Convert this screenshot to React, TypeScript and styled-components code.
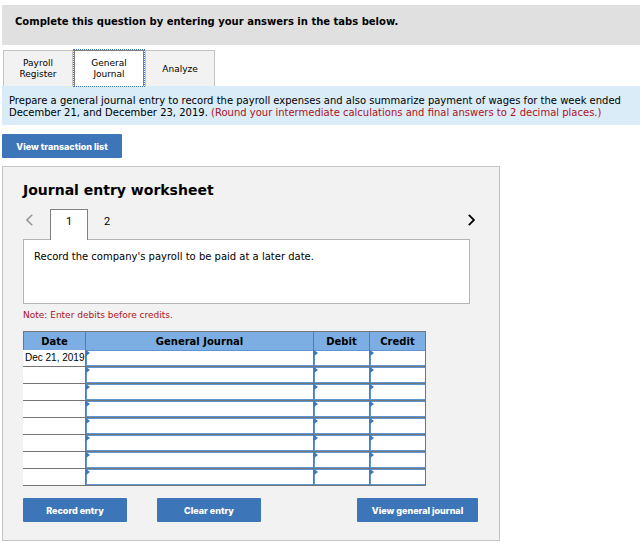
import React, { useState } from "react";
import styled, { createGlobalStyle } from "styled-components";

const GlobalStyle = createGlobalStyle`
  *, *::before, *::after { box-sizing: border-box; }
  body {
    margin: 0;
    background: #fff;
    color: #000;
    font-family: Verdana, "DejaVu Sans", sans-serif;
    font-size: 10px;
    line-height: 12px;
  }
  button, input { font: inherit; color: inherit; }
`;

const Page = styled.main`
  padding: 5px 2px 14px;
`;

const Banner = styled.header`
  background: #e0e0e0;
  padding: 11px 13px 17px;
  font-weight: 700;
`;

const TabBar = styled.div`
  display: flex;
  gap: 1px;
  height: 41px;
  padding: 5px 0 0 1px;
`;

const Tab = styled.button<{ $active: boolean }>`
  width: 70px;
  padding: 1px 8px 0;
  border: 1px solid ${(p) => (p.$active ? "#808080" : "#c4c4c4")};
  border-bottom: 0;
  background: ${(p) => (p.$active ? "#fff" : "#f2f2f2")};
  font-size: 9px;
  line-height: 11px;
  outline: ${(p) => (p.$active ? "1px dotted #3d76b8" : "none")};
  z-index: ${(p) => (p.$active ? 1 : 0)};
`;

const Instructions = styled.p`
  margin: 0;
  padding: 9px 7px 6px;
  background: #daecf8;
`;

const Warning = styled.span`
  color: #b01020;
`;

const ActionButton = styled.button`
  height: 24px;
  padding: 2px 12px 0;
  border: 0;
  border-radius: 1px;
  background: #3d76b8;
  color: #fff;
  font-family: Inter, "Liberation Sans", sans-serif;
  font-size: 9px;
  font-weight: 800;
  white-space: nowrap;
`;

const ListButton = styled(ActionButton)`
  display: block;
  width: 120px;
  margin: 9px 0 8px;
`;

const Panel = styled.section`
  max-width: 498px;
  padding: 14px 21px 18px 20px;
  border: 1px solid #c4c4c4;
  background: #f2f2f2;
`;

const PanelTitle = styled.h2`
  margin: 0;
  font-size: 14px;
  line-height: 18px;
`;

const Pager = styled.nav`
  display: flex;
  align-items: flex-start;
  height: 40px;
  padding-top: 10px;
`;

const Arrow = styled.button`
  display: flex;
  width: 13px;
  height: 22px;
  padding: 0;
  border: 0;
  background: none;
  align-items: center;
  justify-content: center;
`;

const PageTabs = styled.div`
  display: flex;
  flex: 1;
  padding-left: 14px;
`;

const PageTab = styled.button<{ $active: boolean }>`
  width: 38px;
  height: 31px;
  padding: 0 0 6px;
  border: 1px solid ${(p) => (p.$active ? "#808080" : "transparent")};
  border-bottom: 0;
  background: ${(p) => (p.$active ? "#fff" : "transparent")};
  font-family: Roboto, sans-serif;
  font-size: 11px;
  z-index: 1;
`;

const Prompt = styled.div`
  min-height: 65px;
  margin-right: 8px;
  padding: 11px 10px;
  border: 1px solid #b4b4b4;
  background: #fff;
`;

const Note = styled.p`
  margin: 5px 0 10px;
  color: #b01020;
  font-size: 9px;
`;

const Ledger = styled.table`
  width: 100%;
  max-width: 403px;
  border-spacing: 0;
  table-layout: fixed;
`;

const Head = styled.th<{ $width?: number }>`
  width: ${(p) => (p.$width ? `${p.$width}px` : "auto")};
  height: 19px;
  padding: 1px 0 0;
  border: 1px solid #757575;
  border-width: 1px 1px 0 0;
  background: #7caee3;

  &:first-child { border-left-width: 1px; }
`;

const DateCell = styled.td`
  height: 17px;
  padding: 0 0 0 2px;
  border: 1px solid #757575;
  border-width: 0 1px 1px 0;
  background: #fff;
  font-family: "Liberation Sans", Arial, sans-serif;
  white-space: nowrap;
`;

const EntryCell = styled.td`
  position: relative;
  height: 17px;
  padding: 0;
  border: 1px solid #757575;
  border-width: 0 1px 1px 0;
`;

const EntryInput = styled.input`
  display: block;
  width: 100%;
  height: 16px;
  padding: 0 4px;
  border: 1px solid #5f95d2;
  border-right: 0;
  border-radius: 0;
  background: #fff;
  outline: 0;

  &:focus { background: #f3f8fd; }
`;

const Marker = styled.span`
  position: absolute;
  top: 0;
  left: 0;
  border: solid transparent;
  border-width: 3px 0 3px 4px;
  border-left-color: #3d76b8;
  pointer-events: none;
`;

const Actions = styled.footer`
  display: flex;
  gap: 30px;
  margin-top: 12px;
`;

const EntryButton = styled(ActionButton)`
  width: 104px;
`;

const JournalButton = styled(ActionButton)`
  width: 121px;
  margin-left: auto;
`;

const sections = ["Payroll Register", "General Journal", "Analyze"];
const prompts = ["Record the company's payroll to be paid at a later date.", ""];
const dates = ["Dec 21, 2019", "", "", "", "", "", "", ""];
const fields = ["General Journal", "Debit", "Credit"];

export default function App() {
  const [section, setSection] = useState(1);
  const [page, setPage] = useState(0);

  return (
    <>
      <GlobalStyle />
      <Page>
        <Banner>Complete this question by entering your answers in the tabs below.</Banner>
        <TabBar role="tablist">
          {sections.map((name, i) => (
            <Tab key={name} role="tab" aria-selected={i === section} $active={i === section} onClick={() => setSection(i)}>
              {name}
            </Tab>
          ))}
        </TabBar>
        <Instructions>
          Prepare a general journal entry to record the payroll expenses and also summarize payment of wages for the week
          ended December 21, and December 23, 2019.{" "}
          <Warning>(Round your intermediate calculations and final answers to 2 decimal places.)</Warning>
        </Instructions>
        <ListButton>View transaction list</ListButton>
        <Panel>
          <PanelTitle>Journal entry worksheet</PanelTitle>
          <Pager>
            <Arrow aria-label="Previous entry" onClick={() => setPage(0)}>
              <svg width="7" height="12" viewBox="0 0 7 12" fill="none" stroke="#999" strokeWidth="1.6">
                <path d="M6.2 0.8 1 6l5.2 5.2" />
              </svg>
            </Arrow>
            <PageTabs>
              {prompts.map((_, i) => (
                <PageTab key={i} $active={i === page} onClick={() => setPage(i)}>
                  {i + 1}
                </PageTab>
              ))}
            </PageTabs>
            <Arrow aria-label="Next entry" onClick={() => setPage(1)}>
              <svg width="7" height="12" viewBox="0 0 7 12" fill="none" stroke="#000" strokeWidth="1.8">
                <path d="M0.8 0.8 6 6 0.8 11.2" />
              </svg>
            </Arrow>
          </Pager>
          <Prompt>{prompts[page]}</Prompt>
          <Note>Note: Enter debits before credits.</Note>
          <Ledger>
            <thead>
              <tr>
                <Head $width={63}>Date</Head>
                <Head>General Journal</Head>
                <Head $width={56}>Debit</Head>
                <Head $width={56}>Credit</Head>
              </tr>
            </thead>
            <tbody>
              {dates.map((date, row) => (
                <tr key={row}>
                  <DateCell>{date}</DateCell>
                  {fields.map((field) => (
                    <EntryCell key={field}>
                      <EntryInput aria-label={`${field}, row ${row + 1}`} />
                      <Marker />
                    </EntryCell>
                  ))}
                </tr>
              ))}
            </tbody>
          </Ledger>
          <Actions>
            <EntryButton>Record entry</EntryButton>
            <EntryButton>Clear entry</EntryButton>
            <JournalButton>View general journal</JournalButton>
          </Actions>
        </Panel>
      </Page>
    </>
  );
}
